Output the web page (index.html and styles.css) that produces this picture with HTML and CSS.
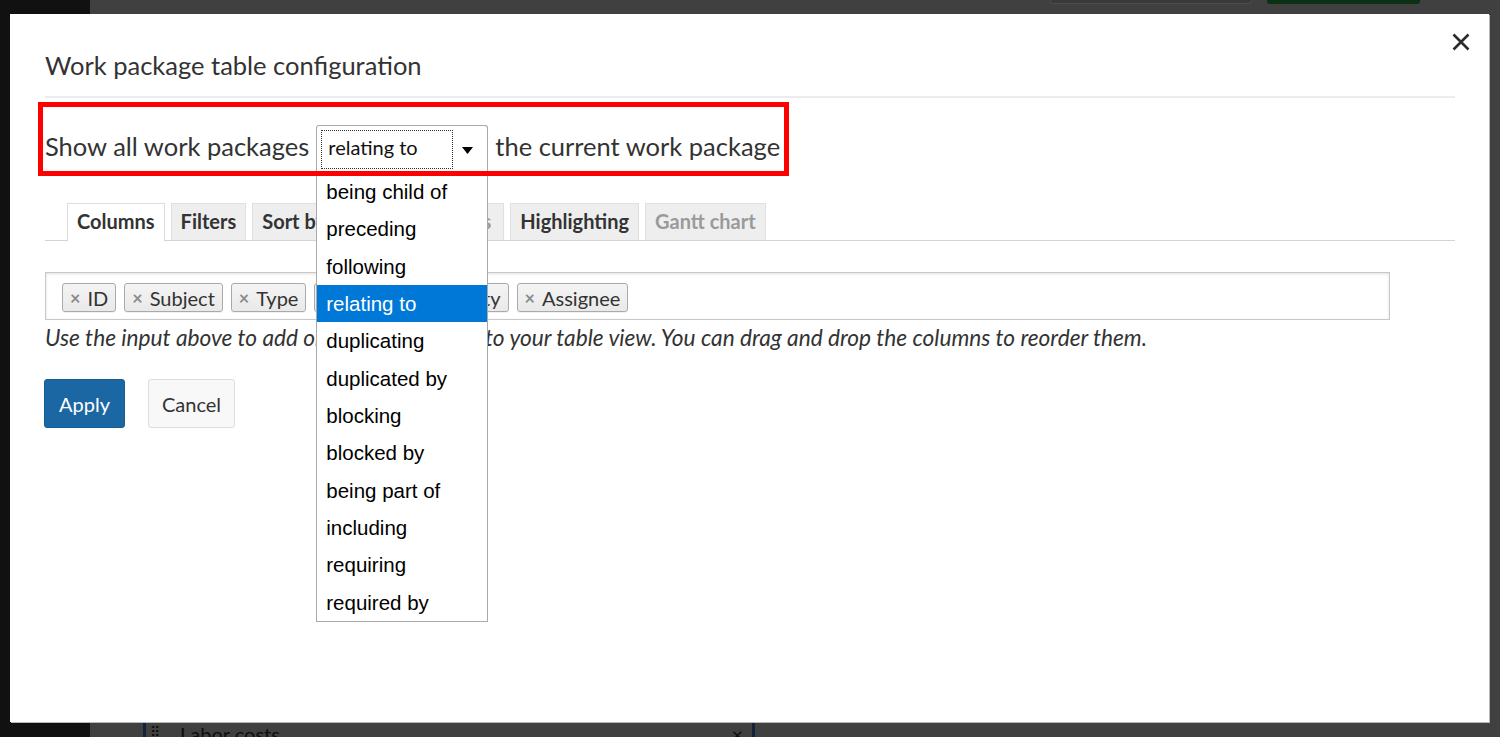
FILE: index.html
```html
<!DOCTYPE html>
<html lang="en">
<head>
<meta charset="utf-8">
<title>Work package table configuration</title>
<link rel="stylesheet" href="styles.css">
</head>
<body>
<div class="app">
  <aside class="sidebar"></aside>
  <main class="main">
    <div class="topbar">
      <div class="top-search"></div>
      <div class="top-create"></div>
    </div>
    <div class="main-body"></div>
    <div class="widget-row">
      <div class="widget">
        <span class="widget-drag">⠿</span>
        <span class="widget-title">Labor costs</span>
        <span class="widget-x">×</span>
      </div>
    </div>
  </main>
</div>

<div class="modal">
  <div class="modal-header">
    <h1 class="modal-title">Work package table configuration</h1>
    <button class="modal-close" aria-label="Close">
      <svg width="18" height="18" viewBox="0 0 18 18"><path d="M1.5 1.5 L16.5 16.5 M16.5 1.5 L1.5 16.5" stroke="#2b2b2b" stroke-width="2.6" fill="none"/></svg>
    </button>
  </div>
  <div class="modal-divider"></div>

  <div class="modal-body">
    <div class="relation-row">
      <span class="relation-text">Show all work packages</span>
      <div class="select">
        <span class="select-focus"><span class="select-value">relating to</span></span>
        <svg class="select-arrow" width="11" height="7" viewBox="0 0 11 7"><polygon points="0,0 11,0 5.5,7" fill="#000"/></svg>
        <ul class="options">
          <li class="option">being child of</li>
          <li class="option">preceding</li>
          <li class="option">following</li>
          <li class="option option-selected">relating to</li>
          <li class="option">duplicating</li>
          <li class="option">duplicated by</li>
          <li class="option">blocking</li>
          <li class="option">blocked by</li>
          <li class="option">being part of</li>
          <li class="option">including</li>
          <li class="option">requiring</li>
          <li class="option">required by</li>
        </ul>
      </div>
      <span class="relation-text">the current work package</span>
      <div class="annotation-box"></div>
    </div>

    <div class="tabs">
      <div class="tab tab-active">Columns</div>
      <div class="tab">Filters</div>
      <div class="tab">Sort by</div>
      <div class="tab tab-disabled tab-wide">Display settings</div>
      <div class="tab">Highlighting</div>
      <div class="tab tab-disabled">Gantt chart</div>
    </div>

    <div class="columns-input">
      <span class="chip"><span class="chip-x">×</span>ID</span>
      <span class="chip"><span class="chip-x">×</span>Subject</span>
      <span class="chip"><span class="chip-x">×</span>Type</span>
      <span class="chip"><span class="chip-x">×</span>Status</span>
      <span class="chip"><span class="chip-x">×</span>Priority</span>
      <span class="chip"><span class="chip-x">×</span>Assignee</span>
    </div>
    <p class="help">Use the input above to add or remove columns to your table view. You can drag and drop the columns to reorder them.</p>

    <div class="actions">
      <button class="btn btn-primary">Apply</button>
      <button class="btn btn-default">Cancel</button>
    </div>
  </div>
</div>
</body>
</html>
```

FILE: styles.css
```css
* { box-sizing: border-box; }

html, body {
  margin: 0;
  padding: 0;
  width: 1500px;
  height: 737px;
  overflow: hidden;
  background: #404040;
  font-family: "Lato", "Open Sans", sans-serif;
}

/* ---------- page behind the modal ---------- */
.app {
  display: flex;
  height: 737px;
}
.sidebar {
  width: 90px;
  flex: none;
  background: #111111;
}
.main {
  flex: 1;
  display: flex;
  flex-direction: column;
  overflow: hidden;
}
.topbar {
  display: flex;
  justify-content: flex-end;
  gap: 15px;
  padding-right: 80px;
  height: 14px;
}
.top-search {
  width: 202px;
  height: 4px;
  background: #393939;
  border: 1px solid #4c4c4c;
  border-top: none;
  border-radius: 0 0 3px 3px;
}
.top-create {
  width: 153px;
  height: 4px;
  background: #0c3013;
  border-radius: 0 0 3px 3px;
}
.main-body { flex: 1; }
.widget-row {
  height: 40px;
  margin-bottom: -25px;
  padding-left: 53px;
}
.widget {
  width: 612px;
  height: 40px;
  display: flex;
  align-items: flex-start;
  border-left: 3px solid #0f2438;
  border-right: 3px solid #0f2438;
  font-size: 20px;
  line-height: 24px;
  color: #0d0d0d;
}
.widget-drag {
  margin-left: 4px;
  font-size: 14px;
  width: 30px;
  line-height: 20px;
}
.widget-title { flex: 1; }
.widget-x { margin-right: 9px; }

/* ---------- modal ---------- */
.modal {
  position: absolute;
  left: 10px;
  top: 14px;
  width: 1479px;
  height: 708px;
  background: #ffffff;
  box-shadow: 1px 1px 0 #b8b8b8;
}
.modal-header {
  display: flex;
  justify-content: space-between;
  align-items: flex-start;
  padding: 19px 19px 0 35px;
}
.modal-title {
  margin: 17px 0 0 0;
  font-size: 25.5px;
  line-height: 30px;
  font-weight: 400;
  color: #333333;
}
.modal-close {
  width: 18px;
  height: 18px;
  padding: 0;
  border: none;
  background: none;
  display: flex;
}
.modal-divider {
  height: 2px;
  background: #ececec;
  margin: 16px 34px 0 35px;
}
.modal-body {
  padding: 0 34px 0 35px;
}

/* ---------- relation row ---------- */
.relation-row {
  position: relative;
  display: flex;
  align-items: center;
  gap: 7px;
  height: 47px;
  margin-top: 27px;
}
.relation-text {
  font-size: 25.5px;
  line-height: 30px;
  color: #333333;
  margin-bottom: 6px;
}
.select {
  position: relative;
  z-index: 5;
  width: 172px;
  height: 47px;
  border: 1px solid #aaaaaa;
  border-bottom: none;
  border-radius: 3px 3px 0 0;
  background: #ffffff;
  display: flex;
  align-items: center;
  padding: 4px 14px 3px 4px;
}
.select-focus {
  width: 132px;
  height: 39px;
  border: 1px dotted #333333;
  display: flex;
  align-items: center;
  padding-left: 6px;
}
.select-value {
  font-size: 20px;
  line-height: 24px;
  color: #111111;
  margin-bottom: 5px;
}
.select-arrow {
  margin-left: auto;
  margin-top: 1px;
}
.options {
  position: absolute;
  left: -1px;
  top: 46px;
  width: 172px;
  margin: 0;
  padding: 0;
  list-style: none;
  background: #ffffff;
  border: 1px solid #aaaaaa;
}
.option {
  height: 37.35px;
  line-height: 37.35px;
  padding-left: 9px;
  font-family: "Liberation Sans", Arial, sans-serif;
  font-size: 20.5px;
  color: #000000;
  white-space: nowrap;
}
.option-selected {
  background: #0078d7;
  color: #ffffff;
}
.annotation-box {
  position: absolute;
  z-index: 6;
  left: -7px;
  top: -23px;
  width: 751px;
  height: 74px;
  border: 5px solid #ff0000;
  pointer-events: none;
}

/* ---------- tabs ---------- */
.tabs {
  display: flex;
  align-items: flex-end;
  gap: 6px;
  margin-top: 31px;
  padding-left: 22px;
  border-bottom: 1px solid #d3d3d3;
  height: 38px;
}
.tab {
  height: 37px;
  padding: 0 9px;
  line-height: 35px;
  font-size: 20px;
  font-weight: 700;
  color: #333333;
  background: #eeeeee;
  border: 1px solid #e0e0e0;
  border-bottom: none;
  white-space: nowrap;
}
.tab-wide { padding-right: 12px; }
.tab-active {
  background: #ffffff;
  border-color: #dddddd;
  height: 38px;
  margin-bottom: -1px;
}
.tab-disabled { color: #9a9a9a; }

/* ---------- columns input ---------- */
.columns-input {
  margin-top: 31px;
  width: 1345px;
  height: 48px;
  border: 1px solid #c8c8c8;
  box-shadow: inset 0 1px 3px rgba(0, 0, 0, 0.12);
  display: flex;
  align-items: center;
  gap: 8px;
  padding: 3px 16px 0 16px;
}
.chip {
  display: inline-flex;
  align-items: center;
  height: 29px;
  padding: 0 7px;
  border: 1px solid #aaaaaa;
  border-radius: 3px;
  background: linear-gradient(#f4f4f4, #e9e9e9);
  font-size: 20px;
  line-height: 24px;
  color: #333333;
  box-shadow: 0 1px 0 rgba(0,0,0,0.06);
}
.chip-x {
  font-size: 18px;
  font-weight: 700;
  color: #8a8a8a;
  margin-right: 7px;
}
.help {
  margin: 4px 0 0 0;
  font-size: 22.7px;
  line-height: 27px;
  font-style: italic;
  color: #333333;
}

/* ---------- actions ---------- */
.actions {
  display: flex;
  gap: 23px;
  margin-top: 28px;
}
.btn {
  height: 49px;
  padding: 0 14px;
  font-family: "Lato", sans-serif;
  font-size: 20px;
  border-radius: 3px;
  cursor: pointer;
}
.btn-primary {
  background: #1a67a3;
  border: 1px solid #175e95;
  color: #ffffff;
  margin-left: -1px;
}
.btn-default {
  background: #f8f8f8;
  border: 1px solid #dddddd;
  color: #333333;
  padding: 0 13px;
}
```
